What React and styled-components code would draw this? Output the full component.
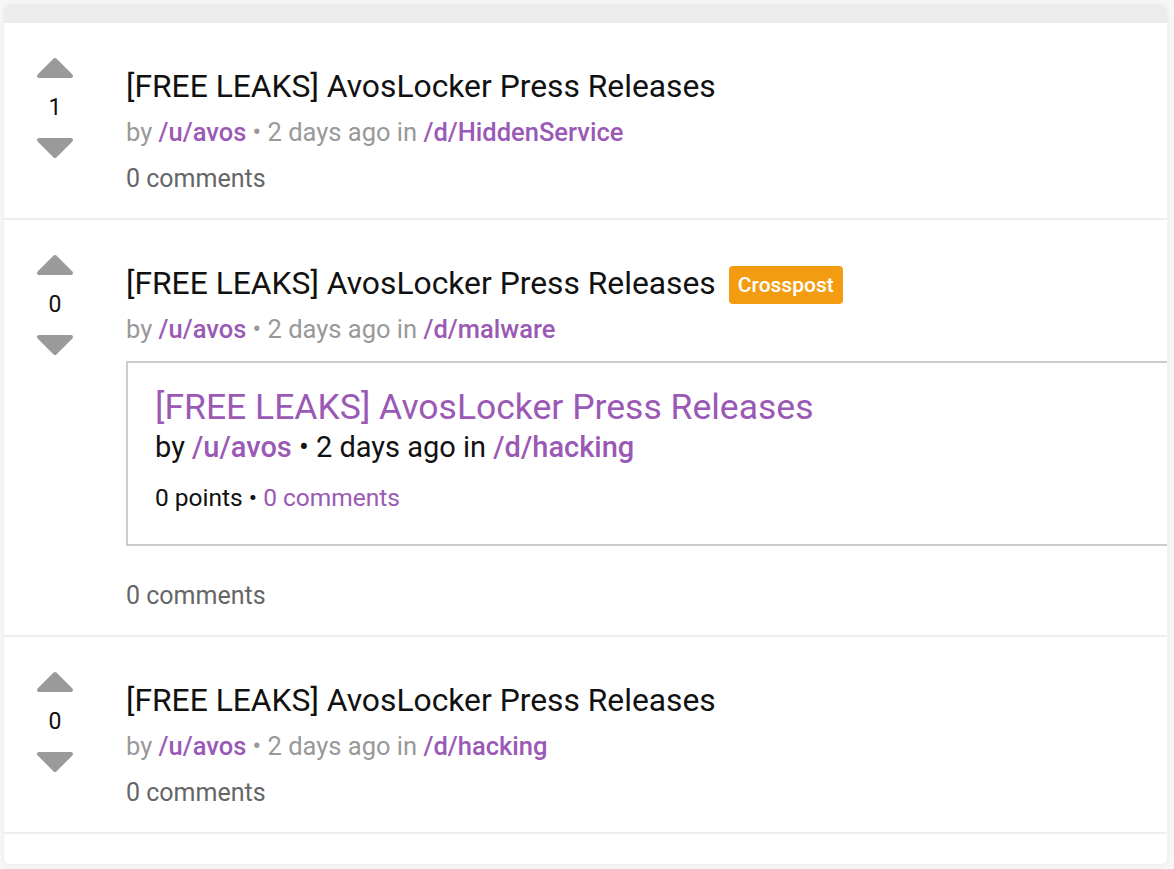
import React from 'react';
import styled, { createGlobalStyle } from 'styled-components';

const GlobalStyle = createGlobalStyle`
	body {
		margin: 0;
		background: #f7f7f7;
		font-family: Roboto, "Liberation Sans", Arial, sans-serif;
	}
`;

const posts = [
	{ id: 1, score: 1, sub: 'HiddenService' },
	{
		id: 2,
		score: 0,
		sub: 'malware',
		crosspost: { sub: 'hacking', points: 0, comments: 0 },
	},
	{ id: 3, score: 0, sub: 'hacking' },
];

const Arrow = ({ down }) => (
	<svg width="38" height="22" viewBox="0 0 38 22">
		<polygon
			points={down ? '3,3 35,3 19,19' : '3,19 35,19 19,3'}
			fill="#9a9a9a"
			stroke="#9a9a9a"
			strokeWidth="4"
			strokeLinejoin="round"
		/>
	</svg>
);

const Post = ({ post }) => (
	<Row>
		<Votes>
			<Arrow />
			<Score>{post.score}</Score>
			<Arrow down />
		</Votes>
		<Content>
			<TitleLine>
				<Title>[FREE LEAKS] AvosLocker Press Releases</Title>
				{post.crosspost && <Badge>Crosspost</Badge>}
			</TitleLine>
			<Meta>
				by <Link>/u/avos</Link> • 2 days ago in <Link>/d/{post.sub}</Link>
			</Meta>
			{post.crosspost && (
				<Embed>
					<EmbedTitle>[FREE LEAKS] AvosLocker Press Releases</EmbedTitle>
					<EmbedMeta>
						by <Link>/u/avos</Link> • 2 days ago in <Link>/d/{post.crosspost.sub}</Link>
					</EmbedMeta>
					<EmbedStats>
						{post.crosspost.points} points • <Plain>{post.crosspost.comments} comments</Plain>
					</EmbedStats>
				</Embed>
			)}
			<Comments>0 comments</Comments>
		</Content>
	</Row>
);

export default function App() {
	return (
		<>
			<GlobalStyle />
			<Page>
				<Card>
					<CardHeader />
					{posts.map((p) => (
						<Post key={p.id} post={p} />
					))}
					<CardFooter />
				</Card>
			</Page>
		</>
	);
}

const Page = styled.div`
	padding: 4px 7px 7px 4px;
`;

const Card = styled.div`
	background: #fff;
	border-radius: 6px;
	overflow: hidden;
	box-shadow: 0 1px 6px rgba(0, 0, 0, 0.06);
`;

const CardHeader = styled.div`
	height: 19px;
	background: #ececec;
`;

const CardFooter = styled.div`
	height: 30px;
`;

const Row = styled.div`
	display: flex;
	padding: 34px 0 24px;
	border-bottom: 2px solid #eeeeee;
`;

const Votes = styled.div`
	width: 102px;
	flex-shrink: 0;
	display: flex;
	flex-direction: column;
	align-items: center;
	svg {
		display: block;
	}
`;

const Score = styled.div`
	font-size: 23px;
	line-height: 58px;
	color: #111;
`;

const Content = styled.div`
	flex: 1;
	min-width: 0;
	margin: 11px 0 0 20px;
	display: flex;
	flex-direction: column;
`;

const TitleLine = styled.div`
	display: flex;
	align-items: center;
	gap: 13px;
	height: 36px;
`;

const Title = styled.div`
	font-size: 31.8px;
	color: #111;
	white-space: nowrap;
`;

const Badge = styled.span`
	background: #f39c12;
	color: #fff;
	font-size: 21px;
	font-weight: 500;
	line-height: 38px;
	padding: 0 9px;
	border-radius: 4px;
	margin-top: 4px;
`;

const Meta = styled.div`
	margin-top: 13px;
	font-size: 25.5px;
	line-height: 30px;
	color: #999;
	white-space: nowrap;
`;

const Link = styled.span`
	color: #9b59b6;
	font-weight: 500;
`;

const Plain = styled.span`
	color: #9b59b6;
`;

const Comments = styled.div`
	margin-top: 17px;
	font-size: 25px;
	line-height: 30px;
	color: #666;
`;

const Embed = styled.div`
	margin: 17px -2px 18px 0;
	height: 185px;
	box-sizing: border-box;
	border: 2px solid #cccccc;
	padding: 24px 27px 0;
	display: flex;
	flex-direction: column;
`;

const EmbedTitle = styled.div`
	font-size: 35.5px;
	line-height: 40px;
	color: #9b59b6;
	white-space: nowrap;
`;

const EmbedMeta = styled.div`
	font-size: 29px;
	line-height: 40px;
	color: #111;
	white-space: nowrap;
`;

const EmbedStats = styled.div`
	margin-top: 16px;
	font-size: 24.5px;
	line-height: 30px;
	color: #111;
`;
